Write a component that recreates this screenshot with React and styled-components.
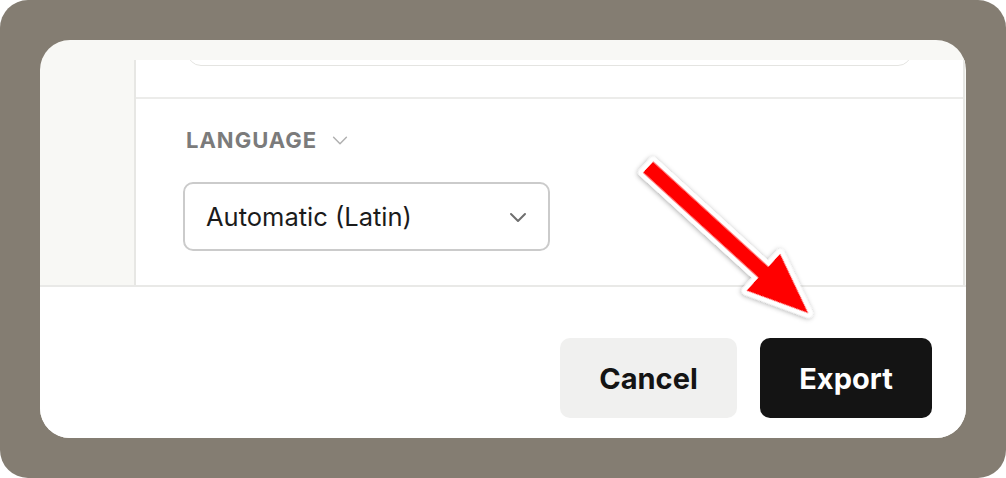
import React from "react";
import styled, { createGlobalStyle } from "styled-components";

const GlobalStyle = createGlobalStyle`
  html, body {
    margin: 0;
    padding: 0;
    background: #ffffff;
  }
  body {
    font-family: "Inter", "Liberation Sans", sans-serif;
  }
`;

const Frame = styled.div`
  position: relative;
  width: 1006px;
  height: 478px;
  box-sizing: border-box;
  padding: 40px 40px 40px 40px;
  background: #847d72;
  border-radius: 28px;
  overflow: hidden;
`;

const Card = styled.div`
  height: 100%;
  display: flex;
  flex-direction: column;
  background: #f8f8f5;
  border-radius: 30px;
  overflow: hidden;
`;

const Body = styled.div`
  height: 245px;
  display: flex;
  flex-shrink: 0;
`;

const Sidebar = styled.div`
  width: 94px;
  flex-shrink: 0;
`;

const Panel = styled.div`
  flex: 1;
  margin: 20px 1px 0 0;
  background: #ffffff;
  border-left: 2px solid #e7e7e4;
  border-right: 2px solid #e7e7e4;
  overflow: hidden;
  display: flex;
  flex-direction: column;
`;

const TopRow = styled.div`
  height: 37px;
  flex-shrink: 0;
  padding: 0 51px;
  border-bottom: 2px solid #ececea;
`;

const FieldStub = styled.div`
  height: 50px;
  margin-top: -46px;
  background: #ffffff;
  border: 1.5px solid #e4e4e1;
  border-radius: 14px;
`;

const Section = styled.div`
  padding: 28px 0 0 47px;
`;

const Label = styled.div`
  display: flex;
  align-items: center;
  gap: 12px;
  padding-left: 3px;
  font-size: 22px;
  font-weight: 700;
  letter-spacing: 1px;
  color: #7b7b7b;
  line-height: 26px;
`;

const Select = styled.div`
  margin-top: 29px;
  width: 367px;
  height: 69px;
  box-sizing: border-box;
  border: 2px solid #cbcbcb;
  border-radius: 10px;
  display: flex;
  align-items: center;
  justify-content: space-between;
  padding: 0 18px 0 21px;
  font-size: 25.5px;
  color: #1b1b1b;
`;

const Footer = styled.div`
  flex: 1;
  background: #ffffff;
  border-top: 2px solid #e9e9e7;
  display: flex;
  justify-content: flex-end;
  align-items: flex-start;
  gap: 23px;
  padding: 51px 34px 0 0;
`;

const Button = styled.button`
  width: ${(p) => p.$w}px;
  height: 80px;
  border: none;
  border-radius: 10px;
  font-family: "Inter", "Liberation Sans", sans-serif;
  font-size: 29px;
  font-weight: 700;
  cursor: pointer;
  background: ${(p) => (p.$primary ? "#141414" : "#f0f0ef")};
  color: ${(p) => (p.$primary ? "#ffffff" : "#141414")};
`;

const Annotation = styled.svg`
  position: absolute;
  left: 0;
  top: 0;
  pointer-events: none;
`;

const Chevron = ({ size, color, width }) => (
  <svg width={size} height={size} viewBox="0 0 24 24" fill="none">
    <path
      d="M5 9l7 7 7-7"
      stroke={color}
      strokeWidth={width}
      strokeLinecap="round"
      strokeLinejoin="round"
    />
  </svg>
);

const App = () => {
  return (
    <>
      <GlobalStyle />
      <Frame>
        <Card>
          <Body>
            <Sidebar />
            <Panel>
              <TopRow>
                <FieldStub />
              </TopRow>
              <Section>
                <Label>
                  LANGUAGE
                  <Chevron size={22} color="#b0b0b0" width={1.6} />
                </Label>
                <Select>
                  Automatic (Latin)
                  <Chevron size={24} color="#6f6f6f" width={2} />
                </Select>
              </Section>
            </Panel>
          </Body>
          <Footer>
            <Button $w={177}>Cancel</Button>
            <Button $w={172} $primary>
              Export
            </Button>
          </Footer>
        </Card>
        <Annotation width="1006" height="478" viewBox="0 0 1006 478">
          <defs>
            <filter id="shadow" x="-20%" y="-20%" width="140%" height="140%">
              <feDropShadow dx="0" dy="1" stdDeviation="2.5" floodColor="#000" floodOpacity="0.35" />
            </filter>
          </defs>
          <g transform="translate(648 167) rotate(42.37)" filter="url(#shadow)">
            <polygon
              points="0,-7.5 156,-7.5 156,-25 217,0 156,25 156,7.5 0,7.5"
              fill="#ff0000"
              stroke="#ffffff"
              strokeWidth="9"
              strokeLinejoin="round"
              paintOrder="stroke"
            />
          </g>
        </Annotation>
      </Frame>
    </>
  );
};

export default App;
